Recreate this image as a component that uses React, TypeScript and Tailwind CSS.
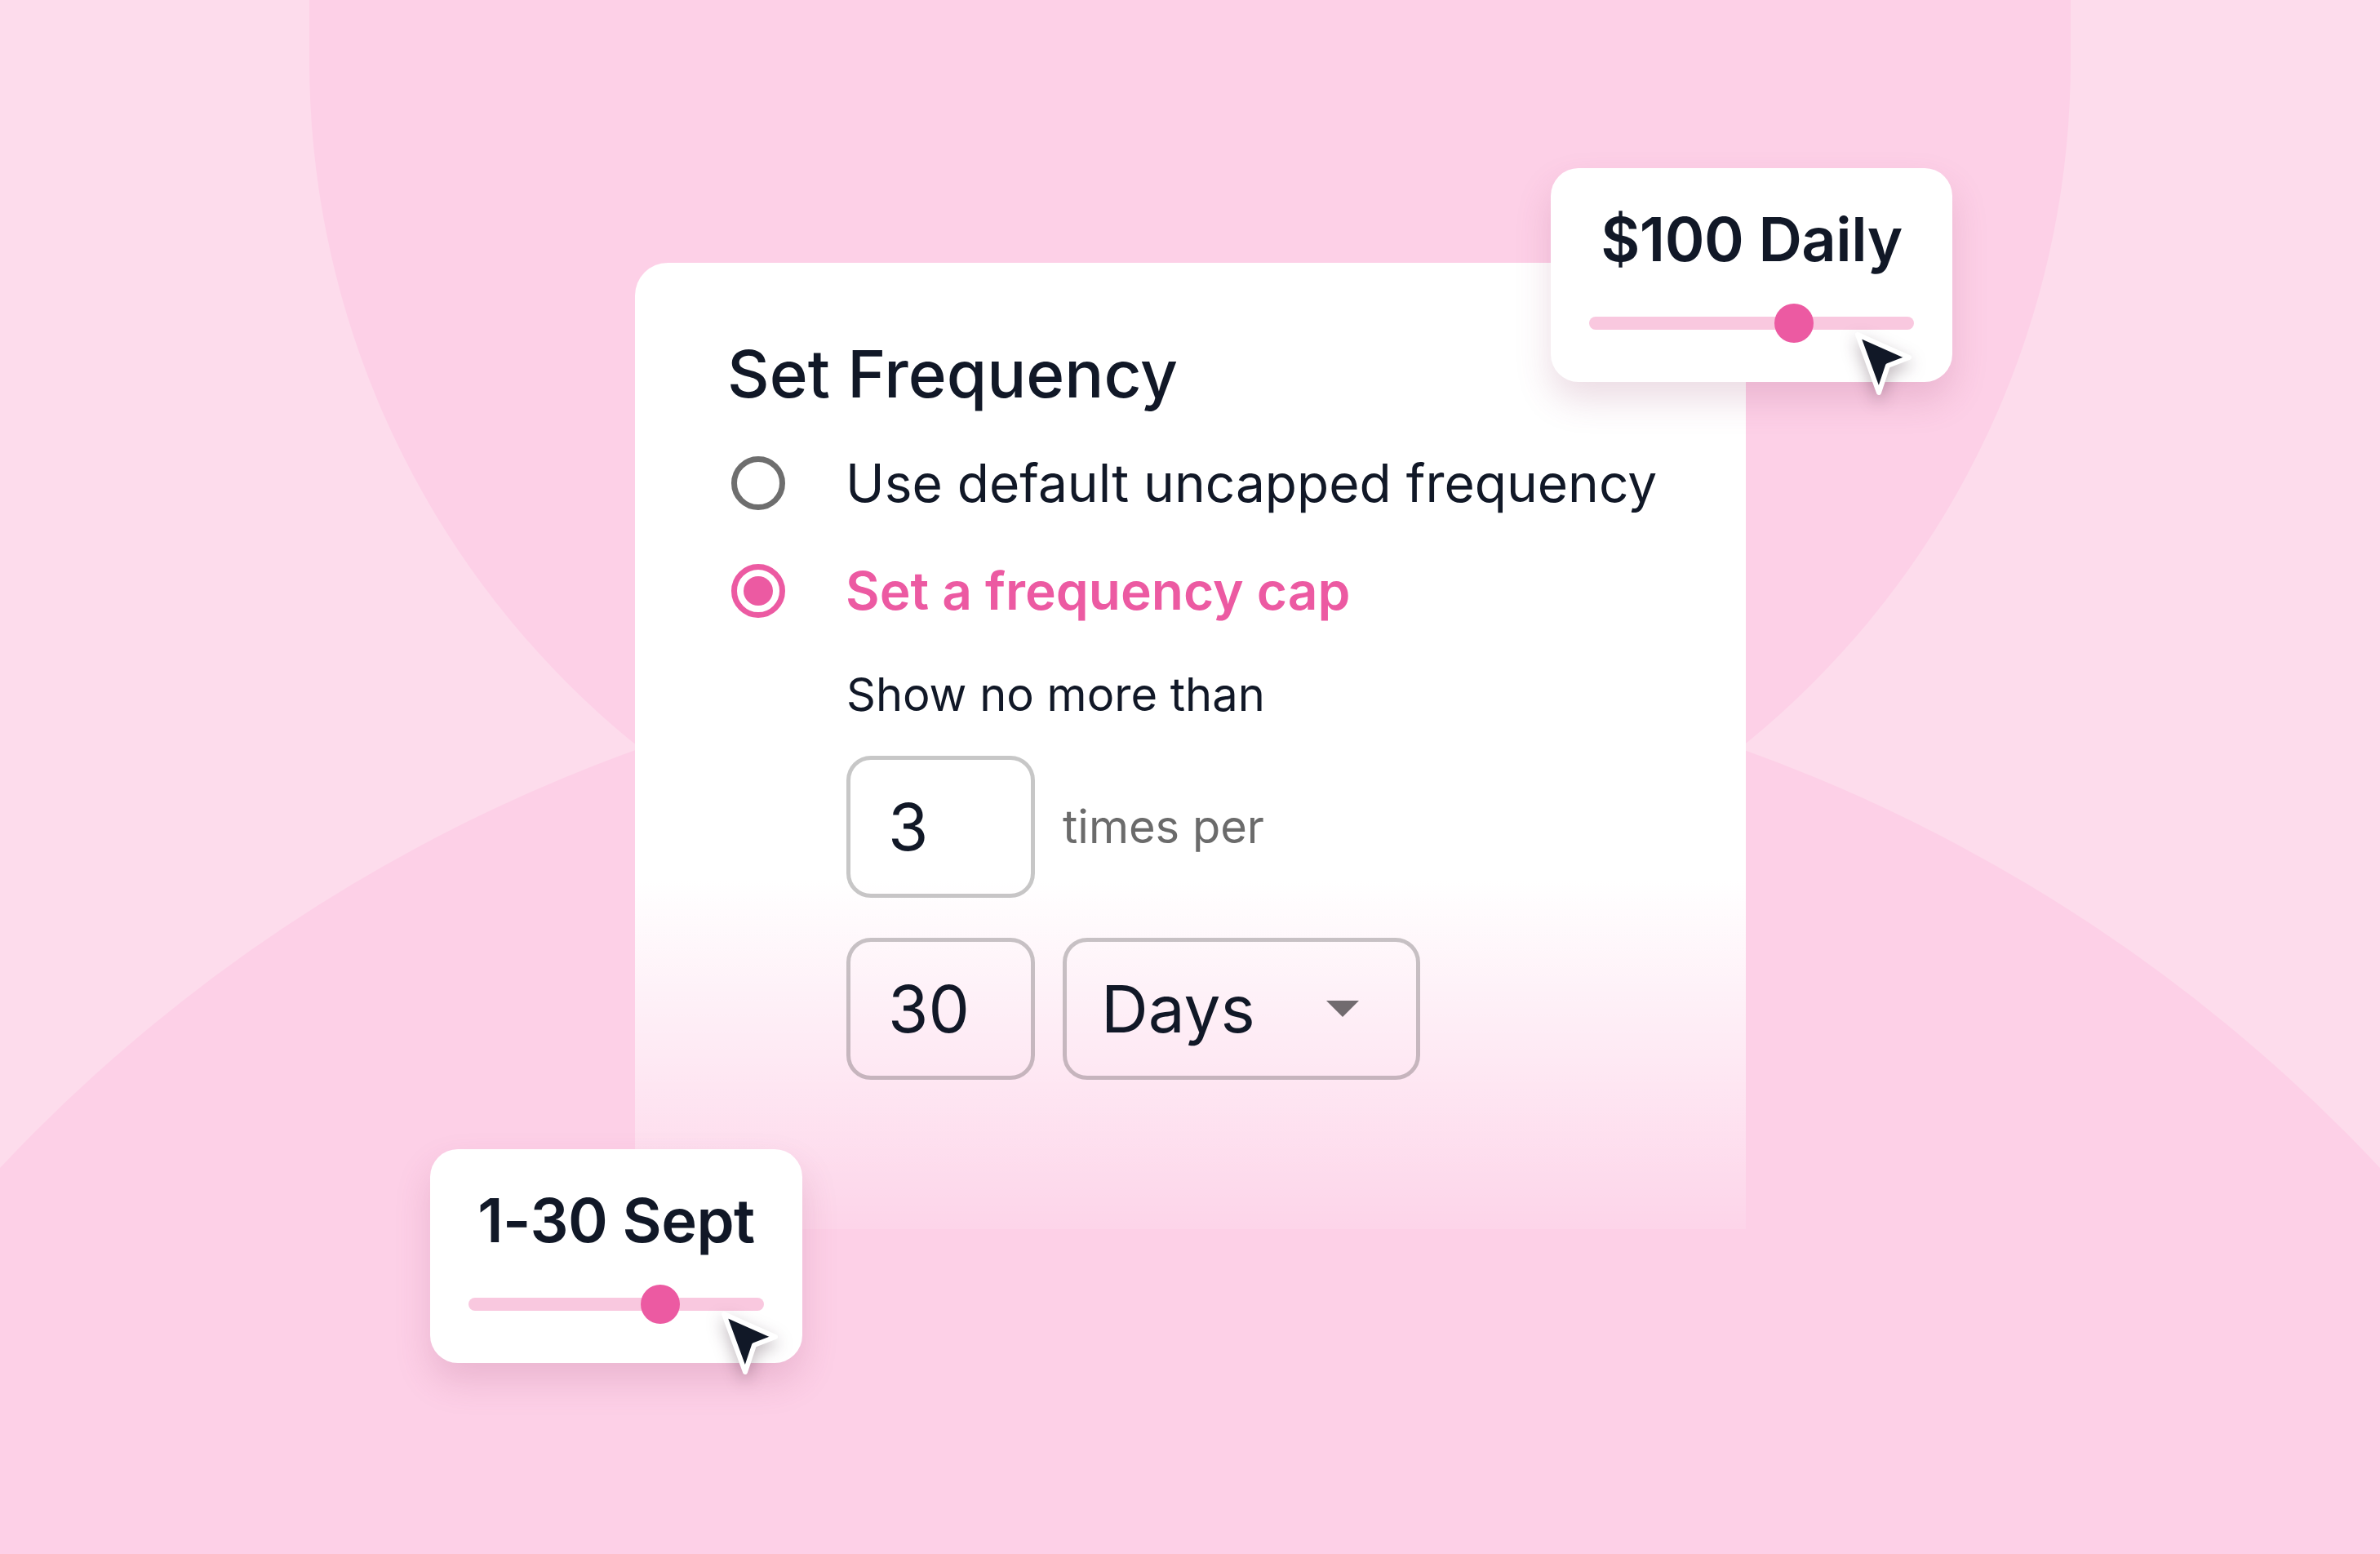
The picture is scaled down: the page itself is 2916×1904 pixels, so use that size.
const font = { fontFamily: 'Inter, "Noto Sans", sans-serif' };

function Cursor({ className }: { className: string }) {
  return (
    <svg
      viewBox="0 0 84 88"
      width={84}
      height={88}
      className={className}
      style={{ filter: 'drop-shadow(0 8px 10px rgba(40, 10, 30, 0.28))' }}
    >
      <path
        d="M8 8 L71 36 L45 46 L34 79 Z"
        fill="#111827"
        stroke="#ffffff"
        strokeWidth={6}
        strokeLinejoin="round"
      />
    </svg>
  );
}

function SliderCard({ label, percent, className }: { label: string; percent: number; className: string }) {
  return (
    <div
      className={`absolute rounded-[34px] bg-white pt-[50px] pb-[48px] shadow-[0_22px_44px_rgba(150,60,105,0.18)] ${className}`}
    >
      <div className="text-center text-[74px] leading-none font-semibold tracking-[-0.5px] text-[#111827]">{label}</div>
      <div className="relative mx-[47px] mt-[42px] h-[48px]">
        <div className="absolute left-0 right-0 top-[16px] h-[16px] rounded-full bg-[#f9c8df]" />
        <div
          className="absolute top-0 h-[48px] w-[48px] -translate-x-1/2 rounded-full bg-[#ec5aa2]"
          style={{ left: `${percent}%` }}
        />
      </div>
    </div>
  );
}

function Radio({ checked }: { checked?: boolean }) {
  if (checked) {
    return (
      <div className="flex h-[66px] w-[66px] shrink-0 items-center justify-center rounded-full border-[7px] border-[#ec5aa2]">
        <div className="h-[36px] w-[36px] rounded-full bg-[#ec5aa2]" />
      </div>
    );
  }
  return <div className="h-[66px] w-[66px] shrink-0 rounded-full border-[7px] border-[#6e6e6e]" />;
}

function Field({ value, wide }: { value: string; wide?: boolean }) {
  return (
    <div
      className={`flex h-[174px] items-center rounded-[30px] border-[5px] border-black/[0.22] text-[80px] leading-none text-[#111827] ${
        wide ? 'w-[438px] justify-between pl-[42px] pr-[70px]' : 'w-[231px] pl-[46px]'
      }`}
    >
      <span>{value}</span>
      {wide && (
        <svg width="40" height="20" viewBox="0 0 40 20">
          <path d="M0 0 H40 L20 20 Z" fill="#716b6f" />
        </svg>
      )}
    </div>
  );
}

export default function App() {
  return (
    <div className="relative h-[1904px] w-[2916px] overflow-hidden bg-[#fddcec]" style={font}>
      {/* background arcs */}
      <svg className="absolute inset-0" width="2916" height="1904" viewBox="0 0 2916 1904">
        <circle cx="1458" cy="74" r="1079" fill="#fdd0e7" />
        <rect x="379" y="-10" width="2158" height="84" fill="#fdd0e7" />
        <circle cx="1458" cy="2800" r="2000" fill="#fdd0e7" />
      </svg>

      <div className="relative pl-[778px] pt-[322px]">
        <div className="relative h-[1184px] w-[1361px] rounded-t-[40px] bg-linear-to-b from-white from-[64%] to-white/10 pl-[118px] pt-[96px] text-[#111827]">
          <h1 className="-ml-[5px] text-[80px] leading-none font-medium">Set Frequency</h1>

          <div className="mt-[61px] flex flex-col gap-[66px]">
            <div className="flex items-center gap-[74px]">
              <Radio />
              <span className="text-[64px] leading-none">Use default uncapped frequency</span>
            </div>
            <div className="flex items-center gap-[74px]">
              <Radio checked />
              <span className="text-[64px] leading-none font-semibold text-[#ec5aa2]">Set a frequency cap</span>
            </div>
          </div>

          <div className="mt-[66px] pl-[141px]">
            <p className="text-[56px] leading-none">Show no more than</p>
            <div className="mt-[47px] flex items-center gap-[34px]">
              <Field value="3" />
              <span className="text-[56px] leading-none text-[#6b6b6b]">times per</span>
            </div>
            <div className="mt-[49px] flex items-center gap-[34px]">
              <Field value="30" />
              <Field value="Days" wide />
            </div>
          </div>

          <SliderCard label="$100 Daily" percent={63} className="left-[1122px] top-[-116px] w-[492px]" />
          <Cursor className="absolute left-[1490px] top-[80px]" />

          <SliderCard label="1-30 Sept" percent={65} className="left-[-251px] top-[1086px] w-[456px]" />
          <Cursor className="absolute left-[101px] top-[1280px]" />
        </div>
      </div>
    </div>
  );
}
